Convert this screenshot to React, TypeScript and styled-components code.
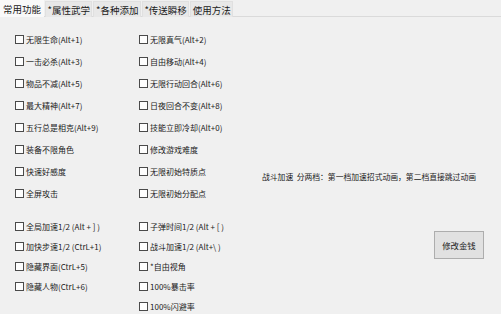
import React from 'react'
import styled, { createGlobalStyle } from 'styled-components'

const GlobalStyle = createGlobalStyle`
  html, body {
    margin: 0;
    padding: 0;
    background: #f0f0f0;
  }
  body {
    font-family: "Noto Sans CJK SC", "Noto Sans", sans-serif;
    color: #111;
  }
`
const Window = styled.div`
  width: 501px;
  height: 314px;
  overflow: hidden;
  display: flex;
  flex-direction: column;
  background: #f0f0f0;
`
const TabBar = styled.div`
  display: flex;
  height: 16px;
  border-bottom: 1px solid #dadada;
  flex-shrink: 0;
`
const Tab = styled.div<{ $active?: boolean }>`
  height: ${props => (props.$active ? '17px' : '15px')};
  margin-top: ${props => (props.$active ? '0' : '1px')};
  padding: 0 ${props => (props.$active ? '3px' : '1.5px')};
  margin-right: 1px;
  display: flex;
  align-items: center;
  font-size: 9.5px;
  background: ${props => (props.$active ? '#f9f9f9' : '#e8e8e8')};
  border: ${props => (props.$active ? 'none' : '1px solid #e0e0e0')};
  border-bottom: none;
  z-index: ${props => (props.$active ? 1 : 0)};
  color: #1a1a1a;
`
const Body = styled.div`
  display: flex;
  flex: 1;
  padding: 11px 0 0 15px;
`
const Columns = styled.div`
  display: flex;
  flex-direction: column;
  width: 247px;
  flex-shrink: 0;
`
const Group = styled.div<{ $row: number, $gap?: number }>`
  display: grid;
  grid-template-columns: 124px 123px;
  grid-auto-rows: ${props => props.$row}px;
  margin-top: ${props => props.$gap || 0}px;
`
const Item = styled.label`
  display: flex;
  align-items: center;
  font-size: 8px;
  white-space: nowrap;
  color: #1a1a1a;
`
const Box = styled.span`
  width: 7px;
  height: 7px;
  border: 1px solid #4a4a4a;
  background: #fdfdfd;
  margin-right: 2px;
  flex-shrink: 0;
`
const Side = styled.div`
  display: flex;
  flex-direction: column;
  flex: 1;
`
const Hint = styled.div`
  margin-top: 143px;
  font-size: 7.8px;
  white-space: pre;
  color: #1a1a1a;
`
const MoneyButton = styled.button`
  align-self: flex-end;
  margin: 49px 17px 0 0;
  width: 50px;
  height: 28px;
  background: #e1e1e1;
  border: 1px solid #adadad;
  font-family: inherit;
  font-size: 8.4px;
  color: #1a1a1a;
  padding: 0;
`

const tabs = ['常用功能', '*属性武学', '*各种添加', '*传送瞬移', '使用方法']

const mainItems: [string, string][] = [
  ['无限生命(Alt+1)', '无限真气(Alt+2)'],
  ['一击必杀(Alt+3)', '自由移动(Alt+4)'],
  ['物品不减(Alt+5)', '无限行动回合(Alt+6)'],
  ['最大精神(Alt+7)', '日夜回合不变(Alt+8)'],
  ['五行总是相克(Alt+9)', '技能立即冷却(Alt+0)'],
  ['装备不限角色', '修改游戏难度'],
  ['快速好感度', '无限初始特质点'],
  ['全屏攻击', '无限初始分配点'],
]

const speedItems: [string | null, string][] = [
  ['全局加速1/2 (Alt + ] )', '子弹时间1/2 (Alt + [ )'],
  ['加快步速1/2 (CtrL+1)', '战斗加速1/2 (Alt+\\ )'],
  ['隐藏界面(CtrL+5)', '*自由视角'],
  ['隐藏人物(CtrL+6)', '100%暴击率'],
  [null, '100%闪避率'],
]

function Check({ text }: { text: string | null }) {
  if (!text) {
    return <span />
  }
  return (
    <Item>
      <Box />
      {text}
    </Item>
  )
}

export default function App() {
  return (
    <Window>
      <GlobalStyle />
      <TabBar>
        {tabs.map((t, i) => <Tab key={t} $active={i === 0}>{t}</Tab>)}
      </TabBar>
      <Body>
        <Columns>
          <Group $row={22}>
            {mainItems.map(([a, b]) => (
              <React.Fragment key={a}>
                <Check text={a} />
                <Check text={b} />
              </React.Fragment>
            ))}
          </Group>
          <Group $row={20} $gap={12}>
            {speedItems.map(([a, b]) => (
              <React.Fragment key={b}>
                <Check text={a} />
                <Check text={b} />
              </React.Fragment>
            ))}
          </Group>
        </Columns>
        <Side>
          <Hint>{'战斗加速  分两档：第一档加速招式动画，第二档直接跳过动画'}</Hint>
          <MoneyButton>修改金钱</MoneyButton>
        </Side>
      </Body>
    </Window>
  )
}
